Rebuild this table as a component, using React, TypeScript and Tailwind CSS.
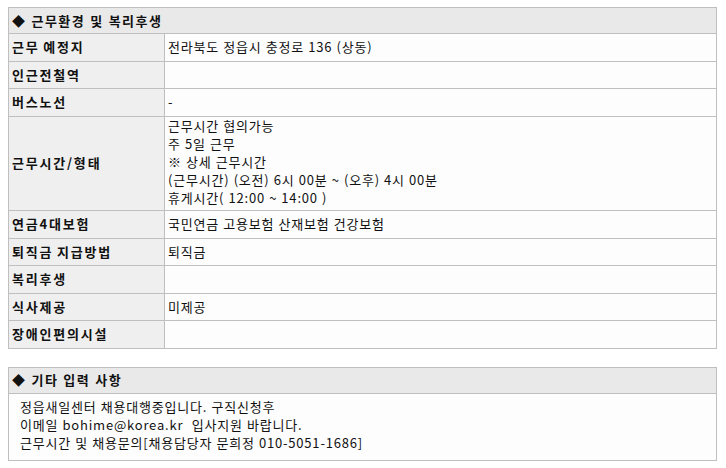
import React from 'react';

interface InfoRow {
  label: string;
  lines: string[];
}

const rows: InfoRow[] = [
  { label: '근무 예정지', lines: ['전라북도 정읍시 충정로 136 (상동)'] },
  { label: '인근전철역', lines: [] },
  { label: '버스노선', lines: ['-'] },
  {
    label: '근무시간/형태',
    lines: [
      '근무시간 협의가능',
      '주 5일 근무',
      '※ 상세 근무시간',
      '(근무시간) (오전) 6시 00분 ~ (오후) 4시 00분',
      '휴게시간( 12:00 ~ 14:00 )',
    ],
  },
  { label: '연금4대보험', lines: ['국민연금 고용보험 산재보험 건강보험'] },
  { label: '퇴직금 지급방법', lines: ['퇴직금'] },
  { label: '복리후생', lines: [] },
  { label: '식사제공', lines: ['미제공'] },
  { label: '장애인편의시설', lines: [] },
];

const etcLines = [
  '정읍새일센터 채용대행중입니다. 구직신청후',
  '이메일 bohime@korea.kr  입사지원 바랍니다.',
  '근무시간 및 채용문의[채용담당자 문희정 010-5051-1686]',
];

export default function App() {
  return (
    <div
      className="min-h-[468px] bg-white pt-[7px] text-[13px] leading-[18px] tracking-[0.8px] text-[#111] [word-spacing:0.5px]"
      style={{ fontFamily: '"Noto Sans CJK KR", "Noto Sans", sans-serif' }}
    >
      {/* 근무환경 및 복리후생 */}
      <div className="ml-[8px] w-[709px] border border-[#bfbfbf]">
        <div className="flex h-[26px] items-center border-b border-[#bfbfbf] bg-[#e9e9e9] pl-[3px] font-bold tracking-[1.5px]">
          ◆ 근무환경 및 복리후생
        </div>
        {rows.map((row, i) => {
          const multi = row.lines.length > 1;
          return (
            <div
              key={row.label}
              className={`flex ${i < rows.length - 1 ? 'border-b border-[#bfbfbf]' : ''}`}
            >
              <div
                className={`flex w-[156px] shrink-0 items-center border-r border-[#bfbfbf] bg-[#efefef] pl-[3px] font-bold tracking-[1.8px] [word-spacing:-1px] ${
                  multi ? 'h-[93.5px]' : 'h-[26.5px]'
                }`}
              >
                {row.label}
              </div>
              <div
                className={`flex flex-1 flex-col justify-center bg-[#fdfdfd] pl-[3px] ${
                  multi ? 'pb-[3.5px] pt-0' : 'py-[2px]'
                }`}
              >
                {row.lines.map((line) => (
                  <div key={line} className="whitespace-pre">
                    {line}
                  </div>
                ))}
              </div>
            </div>
          );
        })}
      </div>

      {/* 기타 입력 사항 */}
      <div className="ml-[8px] mt-[18px] w-[709px] border border-[#bfbfbf]">
        <div className="flex h-[26px] items-center border-b border-[#bfbfbf] bg-[#e9e9e9] pl-[3px] font-bold tracking-[1.5px]">
          ◆ 기타 입력 사항
        </div>
        <div className="bg-[#fdfdfd] pb-[8px] pl-[11px] pt-[4px]">
          {etcLines.map((line) => (
            <div key={line} className="whitespace-pre">
              {line}
            </div>
          ))}
        </div>
      </div>
    </div>
  );
}
